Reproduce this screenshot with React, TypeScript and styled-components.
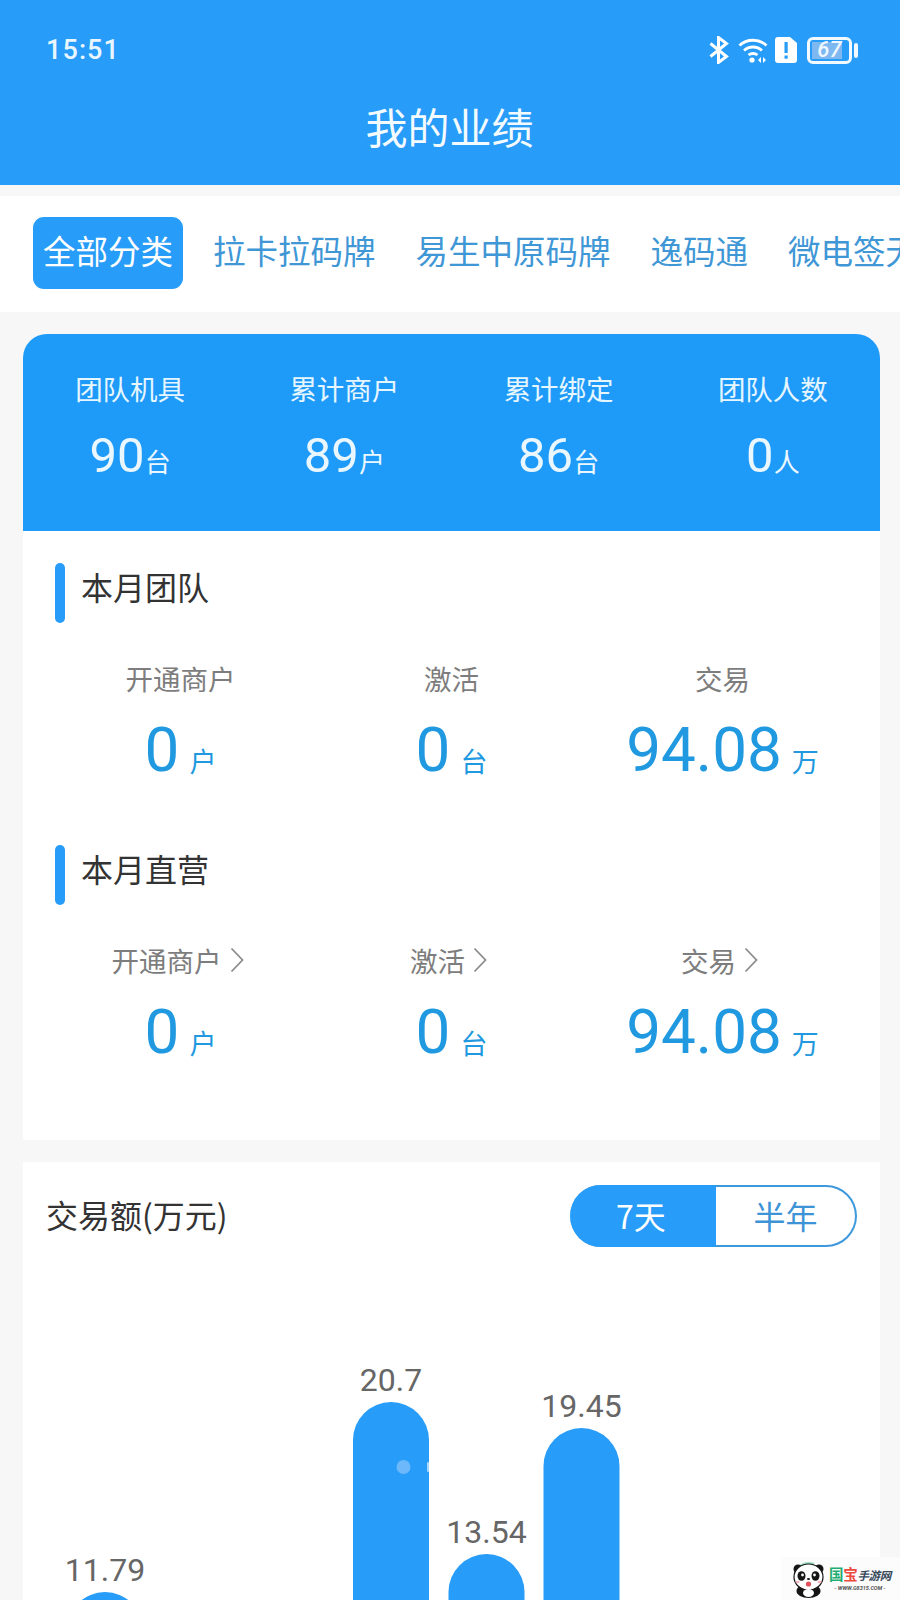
import React from "react";
import styled, { createGlobalStyle } from "styled-components";

const Global = createGlobalStyle`
  html, body { margin: 0; padding: 0; background: #f7f7f7; }
  * { box-sizing: border-box; }
  body { font-family: "Roboto", "Noto Sans CJK SC", sans-serif; }
`;

const BLUE = "#279cf8";
const CJK = `"Noto Sans CJK SC", "Roboto", sans-serif`;

const Page = styled.div`
  width: 900px;
  height: 1600px;
  overflow: hidden;
  position: relative;
  background: #f7f7f7;
`;

const Header = styled.header`
  height: 185px;
  background: ${BLUE};
  color: #fff;
  padding: 32px 43px 0 46px;
`;

const StatusBar = styled.div`
  display: flex;
  align-items: center;
  justify-content: space-between;
  height: 36px;
`;

const Clock = styled.span`
  font-size: 27px;
  font-weight: 500;
  letter-spacing: 1.1px;
  color: #eaf6ff;
`;

const StatusIcons = styled.div`
  display: flex;
  align-items: center;
`;

const Title = styled.h1`
  margin: 29px 0 0 -4px;
  font: 400 42px/58px ${CJK};
  text-align: center;
  color: #f4fbff;
`;

const TabBar = styled.nav`
  margin-top: 11px;
  height: 116px;
  background: #fff;
  display: flex;
  align-items: center;
  gap: 20px;
  padding: 0 0 2px 33px;
  overflow: hidden;
`;

const Tab = styled.div<{ $active?: boolean }>`
  flex: none;
  height: 72px;
  padding: 0 10px 5px;
  display: flex;
  align-items: center;
  border-radius: 11px;
  font: 400 32.5px/1 ${CJK};
  background: ${(p) => (p.$active ? BLUE : "transparent")};
  color: ${(p) => (p.$active ? "#fff" : "#3f97d6")};
`;

const Content = styled.main`
  padding: 22px 20px 0 23px;
`;

const StatsCard = styled.section`
  height: 197px;
  background: #1e9af9;
  border-radius: 24px 24px 0 0;
  display: grid;
  grid-template-columns: repeat(4, 1fr);
  align-content: start;
  padding-top: 36px;
`;

const Stat = styled.div`
  display: flex;
  flex-direction: column;
  align-items: center;
  color: #fff;
`;

const StatLabel = styled.div`
  font: 400 27.5px/36px ${CJK};
  color: #e6f6ff;
`;

const StatValue = styled.div`
  margin-top: 20px;
  font: 400 49px/60px "Roboto", sans-serif;
  color: #eaf7ff;
  display: flex;
  align-items: baseline;
`;

const StatUnit = styled.span`
  font: 400 26px/1 ${CJK};
`;

const PerfCard = styled.section`
  height: 609px;
  background: #fff;
  padding: 32px 22px 0 32px;
`;

const SectionHead = styled.div`
  display: flex;
  align-items: center;
  gap: 16px;
  height: 60px;
`;

const AccentBar = styled.i`
  width: 10px;
  height: 60px;
  border-radius: 5px;
  background: ${BLUE};
`;

const SectionTitle = styled.h2`
  margin: 0 0 14px;
  font: 400 32px/1 ${CJK};
  color: #333;
`;

const Metrics = styled.div`
  display: grid;
  grid-template-columns: repeat(3, 1fr);
  margin: 36px 0 57px -10px;
`;

const Metric = styled.div`
  display: flex;
  flex-direction: column;
  align-items: center;
`;

const MetricLabel = styled.div<{ $arrow?: boolean }>`
  display: flex;
  align-items: center;
  gap: 8px;
  font: 400 27.5px/38px ${CJK};
  color: #7d7d7d;
  height: 38px;
  margin-right: ${(p) => (p.$arrow ? "6px" : "0")};
`;

const MetricValue = styled.div`
  margin-top: 15px;
  display: flex;
  align-items: baseline;
  gap: 10px;
  color: #2099e0;
  font: 400 62px/76px "Roboto", sans-serif;
`;

const MetricUnit = styled.span`
  font: 400 27px/1 ${CJK};
  position: relative;
  top: 1px;
`;

const TradeCard = styled.section`
  margin-top: 22px;
  height: 440px;
  background: #fff;
  padding: 23px 23px 0 23px;
  position: relative;
`;

const TradeHead = styled.div`
  display: flex;
  align-items: center;
  justify-content: space-between;
  height: 62px;
`;

const TradeTitle = styled.h2`
  margin: 0 0 4px;
  font: 400 32px/1 ${CJK};
  color: #333;
`;

const Toggle = styled.div`
  width: 287px;
  height: 62px;
  border: 2px solid #3d99dc;
  border-left: 0;
  border-radius: 31px;
  background: #fff;
  position: relative;
  z-index: 1;
  display: flex;
`;

const ToggleItem = styled.div<{ $active?: boolean }>`
  flex: 0 0 ${(p) => (p.$active ? "146px" : "139px")};
  display: flex;
  align-items: center;
  justify-content: center;
  padding: ${(p) => (p.$active ? "0 4px 3px 0" : "0 0 3px 0")};
  font: 400 32px/1 ${CJK};
  background: ${(p) => (p.$active ? BLUE : "transparent")};
  margin: ${(p) => (p.$active ? "-2px 0" : "0")};
  border-radius: ${(p) => (p.$active ? "31px 0 0 31px" : "0")};
  color: ${(p) => (p.$active ? "#fff" : "#3d93d6")};
`;

const Chart = styled.svg`
  display: block;
  position: absolute;
  left: 0;
  top: 0;
`;

const BarLabel = styled.text`
  font: 400 32px "Roboto", sans-serif;
  fill: #666;
  text-anchor: middle;
`;

const Watermark = styled.div`
  position: absolute;
  right: 0;
  bottom: 0;
  width: 119px;
  height: 43px;
  background: #fcfcfc;
  display: flex;
  align-items: center;
  gap: 4px;
  padding: 3px 0 0 11px;
`;

const MarkText = styled.div`
  display: flex;
  flex-direction: column;
  align-items: center;
  padding-bottom: 3px;
`;

const MarkName = styled.div`
  font: italic 700 11.5px/17px ${CJK};
  color: #37495a;
  white-space: nowrap;
  letter-spacing: -0.3px;
`;

const MarkGreen = styled.span`
  color: #1fae72;
  font-size: 14.5px;
  font-style: normal;
`;

const MarkRed = styled.span`
  color: #ec4a3f;
  font-size: 14.5px;
  font-style: normal;
`;

const MarkUrl = styled.div`
  font: italic 700 5.5px/8px "Roboto", sans-serif;
  color: #555;
  white-space: nowrap;
`;

const Chevron = () => (
  <svg width="14" height="26" viewBox="0 0 14 26" fill="none" stroke="#8c8c8c" strokeWidth="1.8">
    <path d="M1.5 1.5 12.5 13 1.5 24.5" />
  </svg>
);

const BtIcon = styled.svg`
  margin-right: 9px;
`;

const Bluetooth = () => (
  <BtIcon width="20" height="28" viewBox="0 0 20 28" fill="none" stroke="#fff" strokeWidth="3">
    <path d="M1.5 7.5 17.5 20.5 9.5 26.5V1.5L17.5 7.5 1.5 20.5" />
  </BtIcon>
);

const WifiIcon = styled.svg`
  margin-right: 7px;
`;

const Wifi = () => (
  <WifiIcon width="30" height="26" viewBox="0 0 30 26" fill="none" stroke="#fff" strokeWidth="2.8">
    <path d="M1.5 8.5C8.5 1.5 21.5 1.5 28.5 8.5" />
    <path d="M6 13.5C11 8.8 19 8.8 24 13.5" />
    <path d="M10.5 18C13 16 17 16 19.5 18" />
    <circle cx="14" cy="23" r="2.6" fill="#fff" stroke="none" />
    <path d="M23 20 20 23 23 26ZM25 20 28 23 25 26Z" fill="#fff" stroke="none" />
  </WifiIcon>
);

const SimIcon = styled.svg`
  margin-right: 10px;
`;

const Sim = () => (
  <SimIcon width="22" height="26" viewBox="0 0 22 26">
    <path d="M3 0H15L22 6V23A3 3 0 0 1 19 26H3A3 3 0 0 1 0 23V3A3 3 0 0 1 3 0Z" fill="#fff" />
    <rect x="9.5" y="5" width="3.2" height="11" fill={BLUE} />
    <rect x="9.5" y="18.5" width="3.2" height="3.2" fill={BLUE} />
  </SimIcon>
);

const BatteryShell = styled.div`
  position: relative;
  width: 45px;
  height: 27px;
  border: 3px solid #f2f9ff;
  border-radius: 6px;
  padding: 2px;
  margin-right: 5px;
  &::after {
    content: "";
    position: absolute;
    right: -9px;
    top: 3px;
    width: 4px;
    height: 15px;
    border-radius: 2px;
    background: #f2f9ff;
  }
`;

const BatteryFill = styled.div`
  height: 100%;
  background: #7db9f0;
`;

const BatteryText = styled.span`
  position: absolute;
  inset: 0;
  display: flex;
  align-items: center;
  justify-content: center;
  font: italic 500 22px/1 "Roboto", sans-serif;
  color: #eef7ff;
`;

const PandaIcon = styled.svg`
  flex: none;
`;

const Panda = () => (
  <PandaIcon width="33" height="36" viewBox="0 0 33 36">
    <path d="M3 11C6 3 14 0 22 2" fill="none" stroke="#9fe0c4" strokeWidth="2.5" />
    <circle cx="6" cy="7" r="4.5" fill="#151515" />
    <circle cx="27" cy="7" r="4.5" fill="#151515" />
    <ellipse cx="16.5" cy="29" rx="12" ry="7" fill="#151515" />
    <ellipse cx="16.5" cy="15" rx="14.5" ry="13" fill="#fff" stroke="#151515" strokeWidth="1.2" />
    <ellipse cx="9.5" cy="14" rx="4" ry="4.8" fill="#151515" />
    <ellipse cx="23.5" cy="14" rx="4" ry="4.8" fill="#151515" />
    <circle cx="10.5" cy="13" r="1.4" fill="#fff" />
    <circle cx="22.5" cy="13" r="1.4" fill="#fff" />
    <ellipse cx="5.5" cy="20" rx="2" ry="1.3" fill="#f6b5bd" />
    <ellipse cx="27.5" cy="20" rx="2" ry="1.3" fill="#f6b5bd" />
    <ellipse cx="16.5" cy="17" rx="1.6" ry="1.1" fill="#151515" />
    <ellipse cx="16.5" cy="22" rx="2.6" ry="2.6" fill="#e2505a" />
    <ellipse cx="16.5" cy="31" rx="5.5" ry="4" fill="#fff" />
  </PandaIcon>
);

const tabs = ["全部分类", "拉卡拉码牌", "易生中原码牌", "逸码通", "微电签无"];
const stats = [
  { label: "团队机具", value: "90", unit: "台" },
  { label: "累计商户", value: "89", unit: "户" },
  { label: "累计绑定", value: "86", unit: "台" },
  { label: "团队人数", value: "0", unit: "人" },
];
const metrics = [
  { label: "开通商户", value: "0", unit: "户" },
  { label: "激活", value: "0", unit: "台" },
  { label: "交易", value: "94.08", unit: "万" },
];
const bars = [
  { x: 82, top: 430, label: "11.79" },
  { x: 368, top: 240, label: "20.7" },
  { x: 463.5, top: 392, label: "13.54" },
  { x: 558.5, top: 266, label: "19.45" },
];

const MetricRow = ({ arrow }: { arrow?: boolean }) => (
  <Metrics>
    {metrics.map((m) => (
      <Metric key={m.label}>
        <MetricLabel $arrow={arrow}>
          {m.label}
          {arrow && <Chevron />}
        </MetricLabel>
        <MetricValue>
          {m.value}
          <MetricUnit>{m.unit}</MetricUnit>
        </MetricValue>
      </Metric>
    ))}
  </Metrics>
);

export default function App() {
  return (
    <Page>
      <Global />
      <Header>
        <StatusBar>
          <Clock>15:51</Clock>
          <StatusIcons>
            <Bluetooth />
            <Wifi />
            <Sim />
            <BatteryShell>
              <BatteryFill style={{ width: "85%" }} />
              <BatteryText>67</BatteryText>
            </BatteryShell>
          </StatusIcons>
        </StatusBar>
        <Title>我的业绩</Title>
      </Header>
      <TabBar>
        {tabs.map((t, i) => (
          <Tab key={t} $active={i === 0}>{t}</Tab>
        ))}
      </TabBar>
      <Content>
        <StatsCard>
          {stats.map((s) => (
            <Stat key={s.label}>
              <StatLabel>{s.label}</StatLabel>
              <StatValue>
                {s.value}
                <StatUnit>{s.unit}</StatUnit>
              </StatValue>
            </Stat>
          ))}
        </StatsCard>
        <PerfCard>
          <SectionHead>
            <AccentBar />
            <SectionTitle>本月团队</SectionTitle>
          </SectionHead>
          <MetricRow />
          <SectionHead>
            <AccentBar />
            <SectionTitle>本月直营</SectionTitle>
          </SectionHead>
          <MetricRow arrow />
        </PerfCard>
        <TradeCard>
          <TradeHead>
            <TradeTitle>交易额(万元)</TradeTitle>
            <Toggle>
              <ToggleItem $active>7天</ToggleItem>
              <ToggleItem>半年</ToggleItem>
            </Toggle>
          </TradeHead>
          <Chart width="857" height="440" viewBox="0 0 857 440">
            {bars.map((b) => (
              <g key={b.label}>
                <path d={`M${b.x - 38} 460V${b.top + 38}a38 38 0 0 1 76 0V460Z`} fill={BLUE} />
                <BarLabel x={b.x} y={b.top - 11}>{b.label}</BarLabel>
              </g>
            ))}
            <circle cx="380.5" cy="305" r="7" fill="#6db8fb" />
            <rect x="404" y="300" width="2" height="10" rx="1" fill="#a9d6fb" />
          </Chart>
        </TradeCard>
      </Content>
      <Watermark>
        <Panda />
        <MarkText>
          <MarkName><MarkGreen>国</MarkGreen><MarkRed>宝</MarkRed>手游网</MarkName>
          <MarkUrl>- WWW.G8315.COM -</MarkUrl>
        </MarkText>
      </Watermark>
    </Page>
  );
}
